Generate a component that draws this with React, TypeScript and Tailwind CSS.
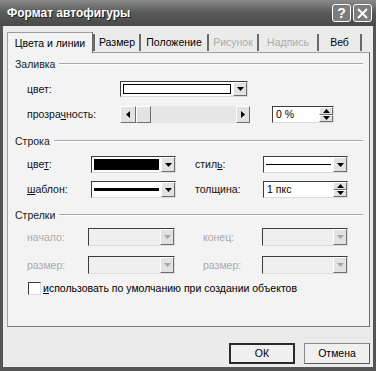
import React from 'react';

function Arrow({ dir, color = '#000' }: { dir: 'down' | 'up' | 'left' | 'right'; color?: string }) {
  const d = {
    down: 'M0 0h7L3.5 4z',
    up: 'M0 4h7L3.5 0z',
    left: 'M4 0v7L0 3.5z',
    right: 'M0 0v7L4 3.5z',
  }[dir];
  const w = dir === 'down' || dir === 'up' ? 7 : 4;
  const h = dir === 'down' || dir === 'up' ? 4 : 7;
  return (
    <svg width={w} height={h} viewBox={`0 0 ${w} ${h}`}>
      <path d={d} fill={color} />
    </svg>
  );
}

function Bevel({ children, className = '' }: { children?: React.ReactNode; className?: string }) {
  return (
    <div className={`flex items-center justify-center bg-[#e2e2e2] border border-t-white border-l-white border-r-[#6e6e6e] border-b-[#6e6e6e] ${className}`}>
      {children}
    </div>
  );
}

function Combo({ width, children, disabled }: { width: string; children?: React.ReactNode; disabled?: boolean }) {
  return (
    <div className={`${width} h-full flex border border-t-[#3c3c3c] border-l-[#3c3c3c] border-r-[#dcdcdc] border-b-[#dcdcdc] ${disabled ? 'bg-[#efefef]' : 'bg-white'}`}>
      <div className="flex-1 flex items-center p-[2px] min-w-0">{children}</div>
      <Bevel className="w-[14px]">
        <Arrow dir="down" color={disabled ? '#a6a6a6' : '#000'} />
      </Bevel>
    </div>
  );
}

function Spin({ width, value }: { width: string; value: string }) {
  return (
    <div className={`${width} h-full flex bg-white border border-t-[#3c3c3c] border-l-[#3c3c3c] border-r-[#dcdcdc] border-b-[#dcdcdc]`}>
      <div className="flex-1 flex items-center pl-[3px] text-black">{value}</div>
      <div className="w-[14px] flex flex-col">
        <Bevel className="flex-1">
          <Arrow dir="up" />
        </Bevel>
        <Bevel className="flex-1">
          <Arrow dir="down" />
        </Bevel>
      </div>
    </div>
  );
}

function Section({ title, className = '' }: { title: string; className?: string }) {
  return (
    <div className={`flex items-center h-[14px] pl-[7px] pr-[6px] ${className}`}>
      <span className="text-[#1c1c1c]">{title}</span>
      <div className="flex-1 ml-[4px] border-t border-t-[#a9a9a9] border-b border-b-white" />
    </div>
  );
}

const tabs = [
  { label: 'Размер', w: 'w-[46px]' },
  { label: 'Положение', w: 'w-[68px]' },
  { label: 'Рисунок', w: 'w-[50px]', off: true },
  { label: 'Надпись', w: 'w-[60px]', off: true },
  { label: 'Веб', w: 'w-[45px]' },
];

export default function App() {
  return (
    <div className="w-[376px] h-[371px] flex flex-col bg-[#555555] font-['Liberation_Sans',Arial,sans-serif] text-[10.5px] leading-none text-[#111]">
      {/* title bar */}
      <div className="h-[26px] flex items-center pl-[7px] pr-[4px] bg-gradient-to-b from-[#8a8a8a] via-[#595959] to-[#4a4a4a]">
        <span className="flex-1 text-white font-bold text-[12px] [text-shadow:1px_1px_0_#222]">Формат автофигуры</span>
        <div className="flex gap-[2px]">
          <div className="w-[19px] h-[18px] rounded-[3px] border border-white bg-[#7c7c7c] flex items-center justify-center text-white font-bold text-[14px]">?</div>
          <div className="w-[19px] h-[18px] rounded-[3px] border border-white bg-[#7c7c7c] flex items-center justify-center">
            <svg width="11" height="11" viewBox="0 0 11 11">
              <path d="M1 1l9 9M10 1l-9 9" stroke="#fff" strokeWidth="2" />
            </svg>
          </div>
        </div>
      </div>

      {/* body */}
      <div className="flex-1 mx-[3px] mb-[4px] bg-[#ebebeb] flex flex-col pl-[4px] pr-[3px] pt-[5px]">
        {/* tab strip */}
        <div className="flex h-[21px] items-end">
          <div className="relative z-10 w-[86px] h-[21px] -mb-px bg-[#f3f3f3] border border-b-0 border-[#9c9c9c] border-r-[#6a6a6a] flex items-center justify-center pt-[1px] text-black">
            Цвета и линии
          </div>
          {tabs.map((t, i) => (
            <div
              key={t.label}
              className={`${t.w} h-[17px] mb-[1px] flex items-center justify-center border-l-2 border-l-[#6a6a6a] ${i === tabs.length - 1 ? 'border-r-2 border-r-[#6a6a6a]' : ''} ${t.off ? 'text-[#ababab]' : 'text-black'}`}
            >
              {t.label}
            </div>
          ))}
        </div>

        {/* panel */}
        <div className="h-[275px] bg-[#f3f3f3] border border-[#a0a0a0] border-r-[#6a6a6a] border-b-[#7a7a7a] flex flex-col">
          <Section title="Заливка" className="mt-[4px]" />
          <div className="flex items-center h-[16px] mt-[10px] pl-[19px]">
            <span className="w-[93px]">цвет:</span>
            <Combo width="w-[128px]">
              <div className="w-full h-full border border-black bg-white" />
            </Combo>
          </div>
          <div className="flex items-center h-[17px] mt-[9px] pl-[19px]">
            <span className="w-[93px]">прозра<u>ч</u>ность:</span>
            <div className="w-[130px] h-full flex bg-[#e6e6e6]">
              <Bevel className="w-[16px]">
                <Arrow dir="left" />
              </Bevel>
              <Bevel className="w-[15px]" />
              <div className="flex-1" />
              <Bevel className="w-[14px]">
                <Arrow dir="right" />
              </Bevel>
            </div>
            <div className="w-[22px]" />
            <Spin width="w-[62px]" value="0 %" />
          </div>

          <Section title="Строка" className="mt-[11px]" />
          <div className="flex items-center h-[17px] mt-[8px] pl-[19px]">
            <span className="w-[64px]">цве<u>т</u>:</span>
            <Combo width="w-[85px]">
              <div className="w-full h-full bg-black" />
            </Combo>
            <span className="w-[19px]" />
            <span className="w-[68px]">стил<u>ь</u>:</span>
            <Combo width="w-[85px]">
              <div className="w-full h-px bg-black" />
            </Combo>
          </div>
          <div className="flex items-center h-[17px] mt-[8px] pl-[19px]">
            <span className="w-[64px]"><u>ш</u>аблон:</span>
            <Combo width="w-[85px]">
              <div className="w-full h-[3px] bg-black" />
            </Combo>
            <span className="w-[19px]" />
            <span className="w-[68px]">толщина:</span>
            <Spin width="w-[85px]" value="1 пкс" />
          </div>

          <Section title="Стрелки" className="mt-[10px]" />
          <div className="flex items-center h-[18px] mt-[6px] pl-[19px] text-[#a9a9a9]">
            <span className="w-[61px]">начало:</span>
            <Combo width="w-[87px]" disabled />
            <span className="w-[28px]" />
            <span className="w-[59px]">конец:</span>
            <Combo width="w-[86px]" disabled />
          </div>
          <div className="flex items-center h-[18px] mt-[10px] pl-[19px] text-[#a9a9a9]">
            <span className="w-[61px]">размер:</span>
            <Combo width="w-[87px]" disabled />
            <span className="w-[28px]" />
            <span className="w-[59px]">размер:</span>
            <Combo width="w-[86px]" disabled />
          </div>
          <div className="flex items-center h-[13px] mt-[8px] pl-[20px]">
            <div className="w-[13px] h-[13px] bg-white border border-t-[#3c3c3c] border-l-[#3c3c3c] border-r-[#dcdcdc] border-b-[#dcdcdc]" />
            <span className="ml-[2px] text-black">
              <u>и</u>спользовать по умолчанию при создании объектов
            </span>
          </div>
        </div>

        {/* buttons */}
        <div className="flex justify-end gap-[9px] mt-[16px]">
          <div className="w-[66px] h-[21px] flex items-center justify-center bg-[#f0f0f0] border-2 border-[#2a2a2a] text-black">ОК</div>
          <div className="w-[66px] h-[21px] flex items-center justify-center bg-[#f0f0f0] border border-[#8a8a8a] border-b-[#5a5a5a] border-r-[#5a5a5a] text-black">Отмена</div>
        </div>
      </div>
    </div>
  );
}
